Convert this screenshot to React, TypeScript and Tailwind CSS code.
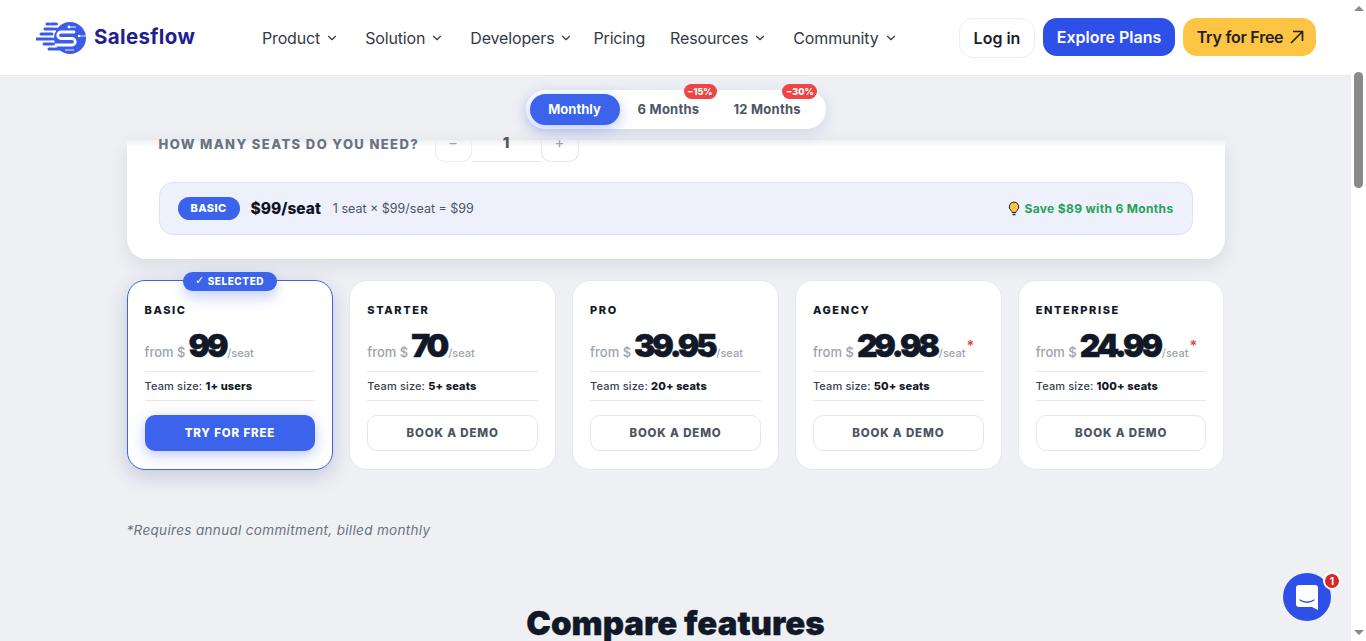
import React from 'react';
import { ChevronDown } from 'lucide-react';

const nav = [
  { label: 'Product', menu: true, cls: '' },
  { label: 'Solution', menu: true, cls: '' },
  { label: 'Developers', menu: true, cls: '' },
  { label: 'Pricing', menu: false, cls: '-ml-[6px] -mr-[1px]' },
  { label: 'Resources', menu: true, cls: '' },
  { label: 'Community', menu: true, cls: '' },
];

const plans = [
  { name: 'BASIC', price: '99', team: '1+ users', selected: true, star: false },
  { name: 'STARTER', price: '70', team: '5+ seats', selected: false, star: false },
  { name: 'PRO', price: '39.95', team: '20+ seats', selected: false, star: false },
  { name: 'AGENCY', price: '29.98', team: '50+ seats', selected: false, star: true },
  { name: 'ENTERPRISE', price: '24.99', team: '100+ seats', selected: false, star: true },
];

function Logo() {
  return (
    <svg width="50" height="32" viewBox="0 0 50 32" fill="none">
      <circle cx="34" cy="16" r="16" fill="#3b5bea" />
      <path d="M11 2h2M15.500 2h5M9 7h13M5 12h11M0 17h17M8 22h10M13 27h11" stroke="#3b5bea" strokeWidth="3" strokeLinecap="round" />
      <path d="M17 4.500h6M17 9.500h3M15 14.500h3M18 19.500h-3M19 24.500h-3" stroke="#fff" strokeWidth="1.400" />
      <path d="M38 10H25a3.200 3.200 0 0 0 0 6.500h11a3.200 3.200 0 0 1 0 6.500H20" stroke="#fff" strokeWidth="2.800" strokeLinecap="round" />
      <path d="M33 5h7M43 14h7M29 28h9" stroke="#fff" strokeWidth="0.900" />
      <circle cx="33" cy="5" r="1.400" fill="#fff" />
      <circle cx="43" cy="14" r="1.200" fill="#fff" />
    </svg>
  );
}

function PlanCard({ plan }: { plan: (typeof plans)[number] }) {
  return (
    <div
      className={
        plan.selected
          ? 'relative flex-1 h-[190px] bg-white rounded-[18px] border border-[#4361d8] px-[17px] pt-[22px] shadow-[0_6px_20px_rgba(50,60,130,0.22)]'
          : 'relative flex-1 h-[190px] bg-white rounded-[18px] border border-[#e6e8ee] px-[17px] pt-[22px]'
      }
    >
      {plan.selected && (
        <span className="absolute -top-[9px] left-[55px] w-[94px] h-[19px] flex items-center justify-center gap-[3px] rounded-full bg-[#3b63ec] text-white text-[10px] font-extrabold tracking-[0.55px] shadow-[0_6px_14px_rgba(59,99,236,0.3)]">
          <span className="font-['DejaVu_Sans'] text-[11px]">✓</span>SELECTED
        </span>
      )}
      <div className="text-[11px] leading-[14px] font-extrabold tracking-[1.6px] text-[#111827]">{plan.name}</div>
      <div className="flex items-baseline h-[37px] mt-[10px]">
        <span className="text-[13px] text-[#9ca3af] font-medium mr-[3px]">from $</span>
        <span className="text-[32px] leading-[37px] font-black text-[#111827] tracking-[-3.2px] mr-[2px] [-webkit-text-stroke:0.5px_#111827]">{plan.price}</span>
        <span className="relative text-[11px] text-[#9ca3af] font-medium">
          /seat
          {plan.star && <span className="absolute -right-[9px] -top-[10px] text-[14px] font-bold text-[#ef4444]">*</span>}
        </span>
      </div>
      <div className="mt-[7px] h-[30px] flex items-center border-y border-[#e5e7eb] text-[11px] tracking-[0.15px] font-medium text-[#374151]">
        Team size:&nbsp;<b className="font-extrabold text-[#111827]">{plan.team}</b>
      </div>
      {plan.selected ? (
        <button className="mt-[14px] w-full h-[36px] pt-[2px] rounded-[10px] bg-[#3b63ec] text-white text-[11.500px] font-extrabold tracking-[0.85px] shadow-[0_4px_14px_rgba(59,99,236,0.35)]">
          TRY FOR FREE
        </button>
      ) : (
        <button className="mt-[14px] w-full h-[36px] pt-[2px] rounded-[10px] bg-white border border-[#e5e7eb] text-[#4b5563] text-[11.500px] font-extrabold tracking-[0.85px]">
          BOOK A DEMO
        </button>
      )}
    </div>
  );
}

export default function App() {
  return (
    <div className="flex h-[641px] overflow-hidden bg-white font-['Inter',sans-serif]">
      <div className="flex-1 min-w-0 flex flex-col bg-[#eef0f4]">
        <header className="h-[76px] shrink-0 flex items-center bg-white border-b border-[#e8e9ef] pl-[36px] pr-[35px]">
          <div className="flex items-center w-[226px] gap-[8px]">
            <Logo />
            <span className="text-[20.500px] font-bold text-[#1e2090] tracking-[0.35px]">Salesflow</span>
          </div>
          <nav className="flex items-center gap-[26px] flex-1">
            {nav.map((item) => (
              <span key={item.label} className={`flex items-center gap-[5px] text-[16px] tracking-[-0.15px] text-[#333a45] ${item.cls}`}>
                {item.label}
                {item.menu && <ChevronDown size={14} strokeWidth={2} className="text-[#333a45]" />}
              </span>
            ))}
          </nav>
          <div className="flex items-start gap-[8px] h-[40px]">
            <button className="w-[76px] h-[40px] rounded-[14px] border border-[#eceef2] bg-white text-[16px] font-semibold text-[#1a1f2b]">Log in</button>
            <button className="w-[132px] h-[38px] rounded-[14px] bg-[#2e50e8] text-white text-[16px] font-semibold">Explore Plans</button>
            <button className="w-[133px] h-[38px] pl-[2px] rounded-[14px] bg-[#fec544] text-[#222] text-[16px] tracking-[-0.25px] font-semibold flex items-center justify-center gap-[7px]">
              Try for Free
              <svg width="14" height="14" viewBox="0 0 14 14" fill="none" stroke="#222" strokeWidth="1.700">
                <path d="M1 13 12.500 1.500M3 1.500h9.500V11" />
              </svg>
            </button>
          </div>
        </header>

        <main className="relative flex-1 min-h-0 overflow-hidden">
          <div className="h-[64px] flex justify-center pt-[14px]">
            <div className="relative z-20 h-[39px] w-[300px] flex items-center rounded-full bg-white pl-[4px] shadow-[0_4px_16px_rgba(60,80,180,0.16)]">
              <span className="w-[90px] h-[31px] flex items-center justify-center rounded-full bg-[#3b63ec] text-white text-[13px] font-bold shadow-[0_4px_14px_rgba(59,99,236,0.35)]">Monthly</span>
              <span className="relative ml-[18px] text-[13px] tracking-[0.25px] font-bold text-[#4b5563]">
                6 Months
                <span className="absolute -top-[16px] left-[46px] w-[33px] h-[15px] flex items-center justify-center rounded-full bg-[#ef4444] text-white text-[9px] tracking-normal font-extrabold">−15%</span>
              </span>
              <span className="relative ml-[34px] text-[13px] tracking-[0.25px] font-bold text-[#4b5563]">
                12 Months
                <span className="absolute -top-[16px] left-[49px] w-[35px] h-[15px] flex items-center justify-center rounded-full bg-[#ef4444] text-white text-[9px] tracking-normal font-extrabold">−30%</span>
              </span>
            </div>
          </div>

          <div className="absolute left-0 right-0 top-[64px] h-[7px] z-10 bg-gradient-to-b from-[#eef0f4] to-transparent" />

          <section className="w-[1098px] mx-auto">
            <div className="h-[119px] bg-white rounded-b-[20px] px-[32px] shadow-[0_6px_18px_rgba(30,40,80,0.10)]">
              <div className="relative z-20 h-[22px] flex items-start">
                <span className="w-[276px] -mt-[4px] text-[13px] leading-[16px] font-extrabold tracking-[1.4px] text-[#6b7280]">HOW MANY SEATS DO YOU NEED?</span>
                <div className="flex h-[22px]">
                  <span className="w-[37px] flex items-start justify-center rounded-b-[10px] border border-t-0 border-[#eceef2] text-[#9ca3af] text-[15px] leading-[6px]">−</span>
                  <span className="w-[69px] flex items-start justify-center border-b border-[#e5e7eb] text-[#4b5563] text-[15px] leading-[6px] font-extrabold">1</span>
                  <span className="w-[38px] flex items-start justify-center rounded-b-[10px] border border-t-0 border-[#e5e7eb] text-[#9ca3af] text-[15px] leading-[6px]">+</span>
                </div>
              </div>
              <div className="mt-[20px] h-[53px] flex items-center rounded-[14px] bg-[#eef1fc] border border-[#dde2f3] pl-[18px] pr-[18px]">
                <span className="w-[62px] h-[23px] flex items-center justify-center rounded-full bg-[#3b63ec] text-white text-[11px] font-extrabold tracking-[0.4px]">BASIC</span>
                <span className="ml-[11px] text-[15.500px] font-extrabold text-[#0f1424]">$99/seat</span>
                <span className="ml-[12px] pt-[1px] text-[12.500px] text-[#4b5563]">1 seat × $99/seat = $99</span>
                <span className="ml-auto flex items-center gap-[4px] text-[12px] tracking-[0.35px] font-bold text-[#25a25a]">
                  <svg width="12" height="15" viewBox="0 0 12 15">
                    <path d="M6 1a4.800 4.800 0 0 0-3 8.500c.7.600 1 1.200 1 2h4c0-.8.300-1.400 1-2A4.800 4.800 0 0 0 6 1z" fill="#fec544" stroke="#1f2937" strokeWidth="1" />
                    <path d="M4.500 13.500h3" stroke="#1f2937" strokeWidth="1.500" />
                  </svg>
                  Save $89 with 6 Months
                </span>
              </div>
            </div>

            <div className="flex gap-[16px] mt-[21px]">
              {plans.map((plan) => (
                <PlanCard key={plan.name} plan={plan} />
              ))}
            </div>

            <p className="mt-[50px] text-[13.500px] italic tracking-[0.33px] text-[#6b7280]">*Requires annual commitment, billed monthly</p>
          </section>

          <h2 className="mt-[67px] text-center text-[33px] leading-[32px] font-black text-[#111827] [-webkit-text-stroke:0.3px_#111827]">Compare features</h2>

          <button className="absolute z-20 left-[1283px] top-[497px] w-[48px] h-[48px] rounded-full bg-[#2e50e8] flex items-center justify-center">
            <svg width="22" height="25" viewBox="0 0 22 25">
              <path d="M3 0h16a3 3 0 0 1 3 3v22l-6-3H3a3 3 0 0 1-3-3V3a3 3 0 0 1 3-3z" fill="#fff" />
              <path d="M4 15c4 3 10 3 14 0" stroke="#2e50e8" strokeWidth="1.300" fill="none" strokeLinecap="round" />
            </svg>
            <span className="absolute -top-[1px] -right-[10px] w-[18px] h-[18px] rounded-full bg-[#dc2626] border-2 border-white text-white text-[10px] font-bold flex items-center justify-center">1</span>
          </button>
        </main>
      </div>

      <aside className="w-[15px] shrink-0 flex flex-col items-center justify-between bg-white py-[6px]">
        <div className="w-0 h-0 border-x-[5px] border-x-transparent border-b-[5px] border-b-[#8a8a8a]" />
        <div className="w-0 h-0 border-x-[5px] border-x-transparent border-t-[5px] border-t-[#8a8a8a]" />
      </aside>
      <div className="absolute left-[1354px] top-[72px] w-[9px] h-[116px] rounded-full bg-[#8a8a8a]" />
    </div>
  );
}
